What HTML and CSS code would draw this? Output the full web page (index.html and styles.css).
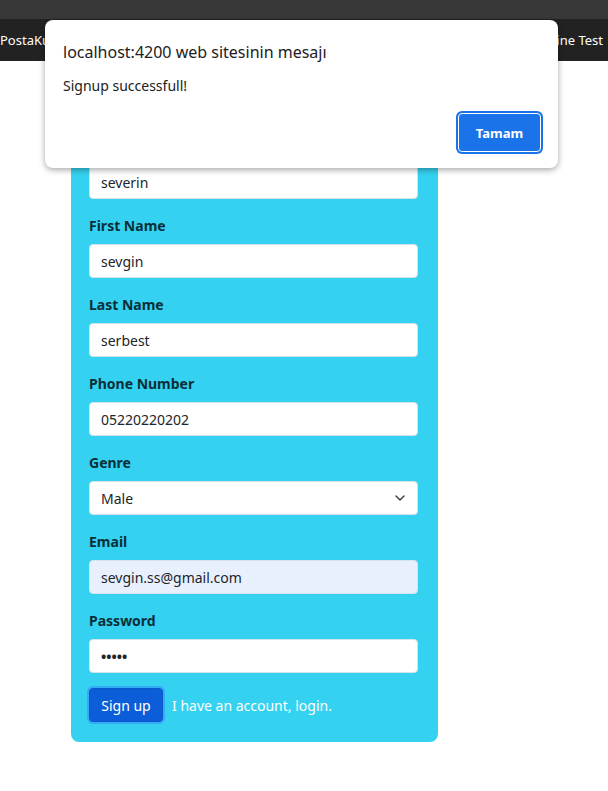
FILE: index.html
```html
<!DOCTYPE html>
<html lang="tr">
<head>
<meta charset="utf-8">
<title>Sign up</title>
<link rel="stylesheet" href="styles.css">
</head>
<body>
<div class="topband"></div>
<nav class="navbar">
  <span class="brand">PostaKutusu</span>
  <span class="navlink">Online Test</span>
</nav>
<main class="page">
  <form class="card">
    <h3 class="card-title">Sign up</h3>
    <div class="group">
      <label class="label">Username</label>
      <input class="field" type="text" value="severin" readonly>
    </div>
    <div class="group">
      <label class="label">First Name</label>
      <input class="field" type="text" value="sevgin" readonly>
    </div>
    <div class="group">
      <label class="label">Last Name</label>
      <input class="field" type="text" value="serbest" readonly>
    </div>
    <div class="group">
      <label class="label">Phone Number</label>
      <input class="field" type="text" value="05220220202" readonly>
    </div>
    <div class="group">
      <label class="label">Genre</label>
      <div class="field select">
        <span>Male</span>
        <svg class="chev" width="12" height="8" viewBox="0 0 12 8"><path d="M2 2 6 6 10 2" fill="none" stroke="#343a40" stroke-width="1.4" stroke-linecap="round" stroke-linejoin="round"/></svg>
      </div>
    </div>
    <div class="group">
      <label class="label">Email</label>
      <input class="field autofill" type="text" value="sevgin.ss@gmail.com" readonly>
    </div>
    <div class="group">
      <label class="label">Password</label>
      <div class="field pass">•••••</div>
    </div>
    <div class="actions">
      <button type="button" class="btn-primary">Sign up</button>
      <span class="login">I have an account, login.</span>
    </div>
  </form>
</main>

<div class="dialog" role="alertdialog">
  <div class="dialog-title">localhost:4200 web sitesinin mesajı</div>
  <div class="dialog-msg">Signup successfull!</div>
  <div class="dialog-actions">
    <button type="button" class="dialog-btn">Tamam</button>
  </div>
</div>
</body>
</html>
```

FILE: styles.css
```css
* { box-sizing: border-box; }
html, body { margin: 0; padding: 0; background: #fff; }
body {
  font-family: "Noto Sans", "Open Sans", sans-serif;
  color: #212529;
  position: relative;
  min-height: 791px;
}
.topband { height: 19px; background: #383838; }
.navbar {
  height: 42px;
  background: #222222;
  display: flex;
  align-items: center;
  justify-content: space-between;
  color: #fff;
  font-size: 13px;
  padding: 0 5px 0 0;
}
.page { padding: 18px 0 0 71px; }
.card {
  width: 367px;
  background: #34d2f0;
  border-radius: 8px;
  padding: 18px 20px 20px 18px;
  margin: 0;
}
.card-title {
  margin: 0 0 8px;
  font-size: 22px;
  line-height: 30px;
  color: #0b2f38;
}
.group { margin-bottom: 15px; }
.label {
  display: block;
  font-weight: 700;
  font-size: 14px;
  line-height: 24px;
  margin-bottom: 6px;
  color: #0b2f38;
}
.field {
  display: block;
  width: 100%;
  height: 34px;
  border: 1px solid #d3e4ea;
  border-radius: 4px;
  background: #fff;
  padding: 0 11px;
  font-family: inherit;
  font-size: 14px;
  color: #212529;
  outline: none;
}
.autofill { background: #e8f0fe; }
.select {
  display: flex;
  align-items: center;
  justify-content: space-between;
  padding-right: 11px;
}
.pass {
  display: flex;
  align-items: center;
  font-size: 14px;
  font-weight: 700;
}
.actions {
  display: flex;
  align-items: center;
  gap: 9px;
}
.btn-primary {
  width: 74px;
  height: 34px;
  background: #0b5ed7;
  border: 1px solid #0a58ca;
  border-radius: 4px;
  color: #fff;
  font-family: inherit;
  font-size: 14px;
  box-shadow: 0 0 0 2px rgba(49, 132, 253, 0.5);
  padding: 0;
}
.login { color: #fff; font-size: 14px; }

.dialog {
  position: absolute;
  left: 45px;
  top: 20px;
  width: 513px;
  height: 148px;
  background: #fff;
  border-radius: 8px;
  box-shadow: 0 2px 6px rgba(0, 0, 0, 0.35);
  padding: 20px 17px 0 18px;
  font-family: "Noto Sans", "Open Sans", sans-serif;
  color: #202124;
}
.dialog-title { font-size: 16px; line-height: 24px; }
.dialog-msg { font-size: 14px; line-height: 20px; margin-top: 12px; }
.dialog-actions {
  display: flex;
  justify-content: flex-end;
  margin-top: 17px;
}
.dialog-btn {
  width: 83px;
  height: 39px;
  background: #1a73e8;
  color: #fff;
  font-family: inherit;
  font-weight: 700;
  font-size: 13px;
  border: 1px solid #fff;
  border-radius: 4px;
  box-shadow: 0 0 0 2px #1a73e8;
  padding: 0;
}
```
